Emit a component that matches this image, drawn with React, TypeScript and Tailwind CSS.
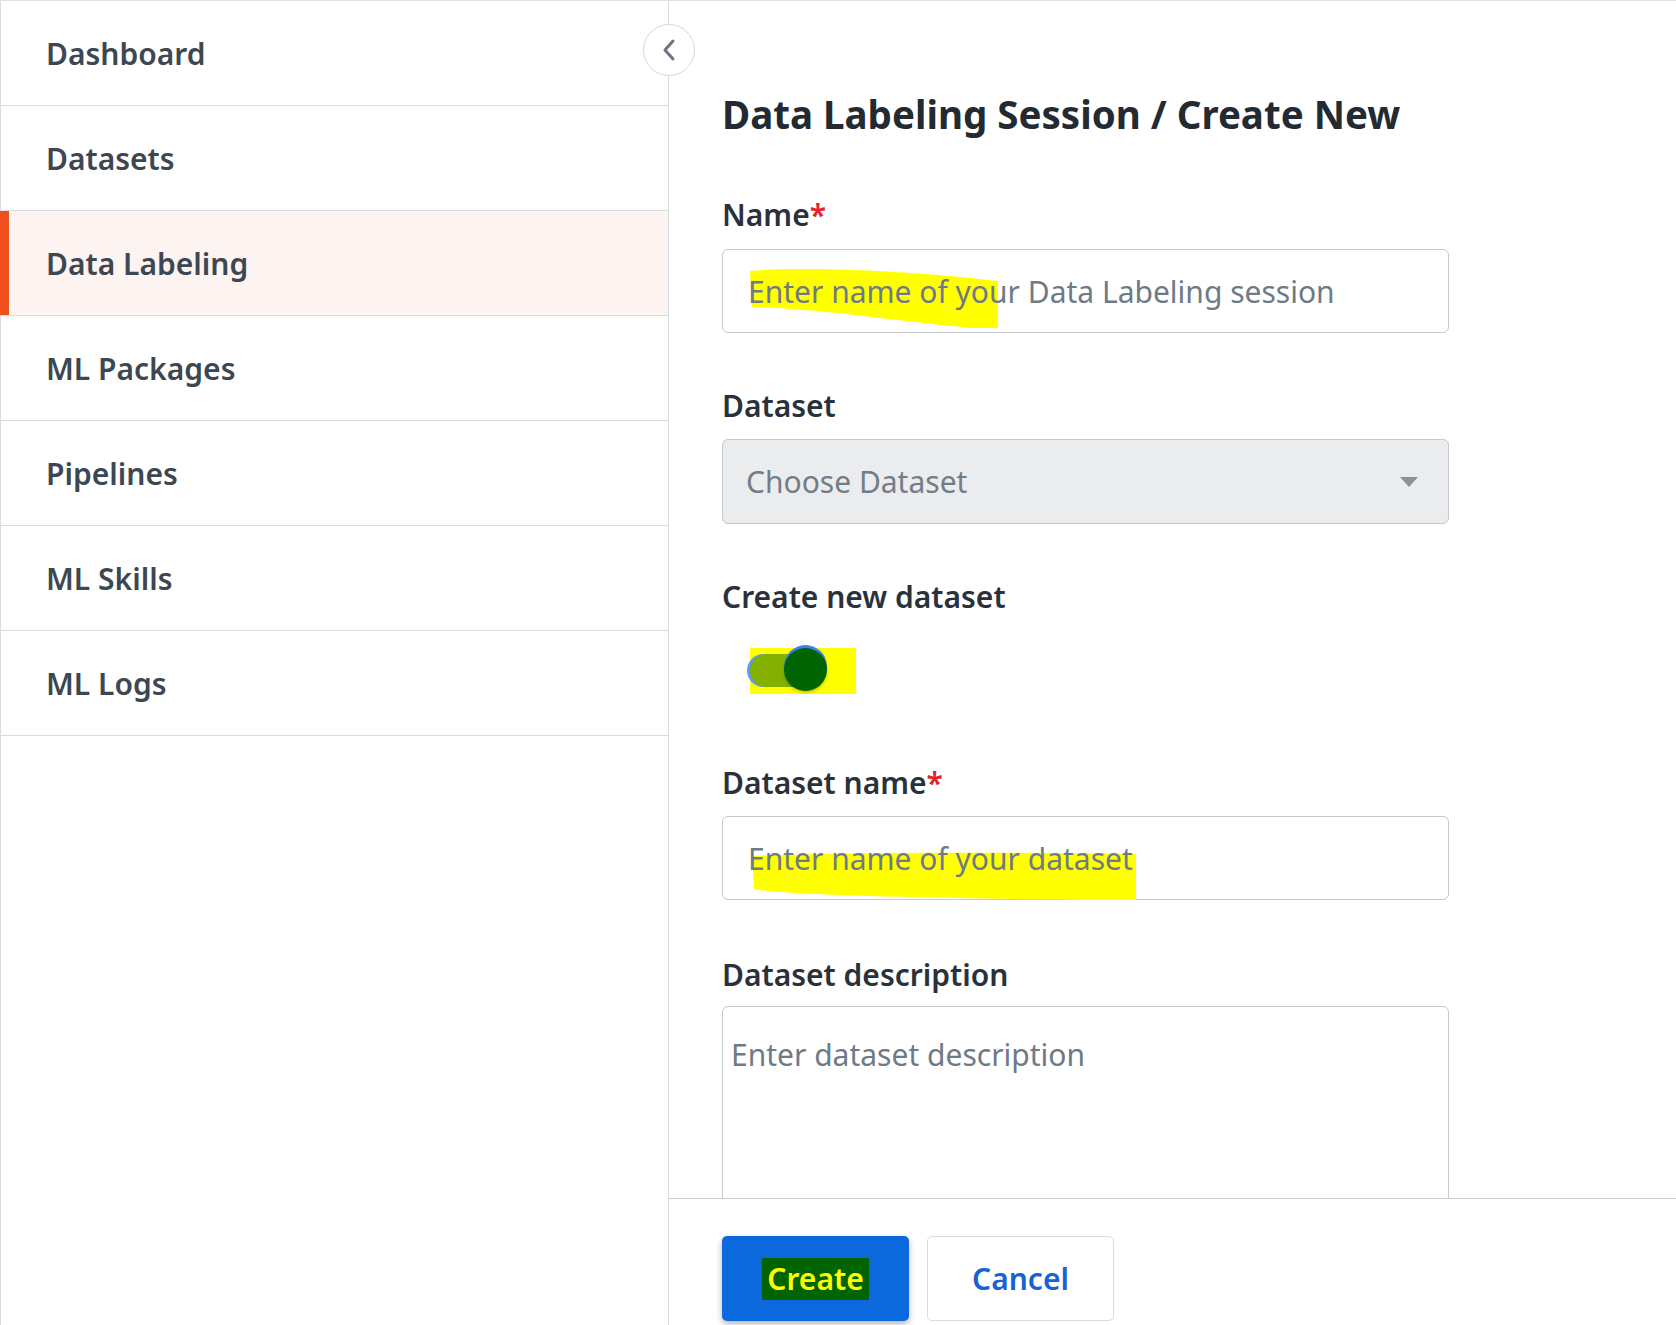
import React from 'react';

const navItems = ['Dashboard', 'Datasets', 'Data Labeling', 'ML Packages', 'Pipelines', 'ML Skills', 'ML Logs'];

const Sidebar: React.FC = () => (
  <aside className="relative w-[669px] shrink-0 h-full border-l border-r border-[#d9dde1] bg-white">
    <nav className="flex flex-col">
      {navItems.map((item) => {
        const active = item === 'Data Labeling';
        return (
          <div
            key={item}
            className={`relative h-[105px] flex items-center pl-[45px] border-b border-[#d9dde1] ${active ? 'bg-[#fdf3f1]' : 'bg-white'}`}
          >
            {active && <span className="absolute left-[-1px] top-0 bottom-0 w-[9px] bg-[#f0501e]" />}
            <span className="text-[30px] font-semibold text-[#3d4751]">{item}</span>
          </div>
        );
      })}
    </nav>

    {/* collapse button */}
    <button className="absolute right-[-27px] top-[23px] w-[52px] h-[52px] rounded-full border border-[#d5d9dd] bg-white flex items-center justify-center z-10">
      <svg width="16" height="24" viewBox="0 0 16 24" fill="none">
        <path d="M12 3 L4 12 L12 21" stroke="#6b7580" strokeWidth="3" strokeLinecap="round" strokeLinejoin="round" />
      </svg>
    </button>
  </aside>
);

const Label: React.FC<{ text: string; required?: boolean; className?: string }> = ({ text, required, className }) => (
  <div className={`text-[30px] leading-[36px] font-semibold text-[#29313a] ${className ?? ''}`}>
    {text}
    {required && <span className="text-[#e5202a]">*</span>}
  </div>
);

const NameHighlight: React.FC = () => (
  <svg className="absolute left-[25px] top-[17px]" width="252" height="62" viewBox="0 0 252 62">
    <path d="M2 4 C40 0 120 2 190 8 C215 10 230 12 250 14 L250 61 L225 61 C190 58 140 52 90 46 C50 42 20 40 4 40 Z" fill="#ffff00" />
  </svg>
);

const DatasetNameHighlight: React.FC = () => (
  <svg className="absolute left-[27px] top-[29px]" width="388" height="55" viewBox="0 0 388 55">
    <path d="M2 10 C100 6 250 6 386 8 L386 54 C300 54 200 52 120 50 C60 48 20 46 4 43 Z" fill="#ffff00" />
  </svg>
);

const Toggle: React.FC = () => (
  <div className="relative ml-[26px] w-[110px] h-[48px]">
    <div className="absolute left-[2px] top-[1px] w-[106px] h-[46px] bg-[#ffff00]" />
    <div className="absolute left-[-1px] top-[7px] w-[66px] h-[33px] rounded-full bg-[#5d9cf0]" />
    <div className="absolute left-[2px] top-[7px] w-[64px] h-[33px] rounded-full bg-[#84b000]" />
    <div className="absolute left-[36px] top-[-2px] w-[43px] h-[43px] rounded-full bg-[#3b82f0]" />
    <div className="absolute left-[36px] top-[1px] w-[43px] h-[43px] rounded-full bg-[#006400] shadow-[0_2px_3px_rgba(0,0,0,0.2)]" />
  </div>
);

const Form: React.FC = () => (
  <div className="flex-1 overflow-hidden pl-[53px]">
    <div className="w-[727px]">
      <h1 className="mt-[89px] text-[38.5px] leading-[48px] font-bold text-[#232a31] whitespace-nowrap">Data Labeling Session / Create New</h1>

      <Label text="Name" required className="mt-[59px]" />
      <div className="relative mt-[16px] h-[84px] rounded-[6px] border border-[#c3c9cf] bg-white flex items-center pl-[25px]">
        <NameHighlight />
        <span className="relative text-[30px] text-[#6e7a86]">Enter name of your Data Labeling session</span>
      </div>

      <Label text="Dataset" className="mt-[55px]" />
      <div className="mt-[15px] h-[85px] rounded-[6px] border border-[#c3c9cf] bg-[#eaecee] flex items-center justify-between pl-[23px] pr-[30px]">
        <span className="text-[30px] text-[#737d87]">Choose Dataset</span>
        <svg width="18" height="10" viewBox="0 0 18 10">
          <path d="M0 0 L18 0 L9 10 Z" fill="#8a9299" />
        </svg>
      </div>

      <Label text="Create new dataset" className="mt-[55px]" />
      <div className="mt-[32px]">
        <Toggle />
      </div>

      <Label text="Dataset name" required className="mt-[70px]" />
      <div className="relative mt-[15px] h-[84px] rounded-[6px] border border-[#c3c9cf] bg-white flex items-center pl-[25px]">
        <DatasetNameHighlight />
        <span className="relative text-[30px] text-[#6e7a86]">Enter name of your dataset</span>
      </div>

      <Label text="Dataset description" className="mt-[57px]" />
      <div className="mt-[13px] h-[260px] rounded-[6px] border border-[#c3c9cf] bg-white pl-[8px] pt-[30px]">
        <span className="text-[30px] leading-[36px] text-[#6e7a86]">Enter dataset description</span>
      </div>
    </div>
  </div>
);

const Footer: React.FC = () => (
  <div className="h-[127px] shrink-0 border-t border-[#c8cdd2] bg-white pl-[53px] pt-[37px] flex gap-[18px]">
    <button className="w-[187px] h-[85px] rounded-[5px] bg-[#0b69dd] shadow-[0_3px_6px_rgba(0,0,0,0.3)] flex items-center justify-center">
      <span className="bg-[#006400] px-[5px] h-[42px] flex items-center text-[30px] font-semibold text-[#ffff00]">Create</span>
    </button>
    <button className="w-[187px] h-[85px] rounded-[5px] border border-[#d9dde1] bg-white flex items-center justify-center">
      <span className="text-[30px] font-semibold text-[#1762d4]">Cancel</span>
    </button>
  </div>
);

export default function App() {
  return (
    <div className="h-screen w-full flex border-t border-[#dfe2e5] bg-white overflow-hidden font-['Noto_Sans',_sans-serif]">
      <Sidebar />
      <main className="flex-1 flex flex-col min-w-0">
        <Form />
        <Footer />
      </main>
    </div>
  );
}
